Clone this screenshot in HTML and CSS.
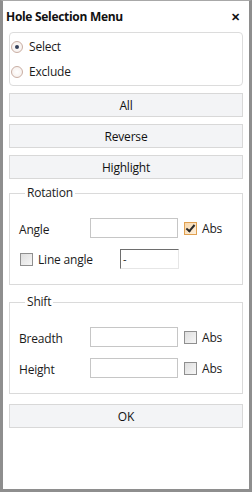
FILE: index.html
```html
<!DOCTYPE html>
<html>
<head>
<meta charset="utf-8">
<link rel="stylesheet" href="styles.css">
</head>
<body>
<div class="window">
  <div class="titlebar">
    <span class="title">Hole Selection Menu</span>
    <span class="close">✕</span>
  </div>
  <div class="content">
    <div class="radio-group">
      <div class="radio-row"><span class="radio checked"></span><span>Select</span></div>
      <div class="radio-row"><span class="radio"></span><span>Exclude</span></div>
    </div>
    <div class="btn">All</div>
    <div class="btn">Reverse</div>
    <div class="btn">Highlight</div>
    <fieldset class="group rotation">
      <legend>Rotation</legend>
      <div class="row">
        <span class="label">Angle</span>
        <span class="input"></span>
        <span class="check checked"></span>
        <span class="abs">Abs</span>
      </div>
      <div class="row line-row">
        <span class="check"></span>
        <span class="line-label">Line angle</span>
        <span class="input sunken">-</span>
      </div>
    </fieldset>
    <fieldset class="group shift">
      <legend>Shift</legend>
      <div class="row">
        <span class="label">Breadth</span>
        <span class="input"></span>
        <span class="check"></span>
        <span class="abs">Abs</span>
      </div>
      <div class="row">
        <span class="label">Height</span>
        <span class="input"></span>
        <span class="check"></span>
        <span class="abs">Abs</span>
      </div>
    </fieldset>
    <div class="btn ok">OK</div>
  </div>
</div>
</body>
</html>
```

FILE: styles.css
```css
html, body {
  margin: 0;
  padding: 0;
  background: #ffffff;
}
body {
  font-family: "Open Sans", "Noto Sans", sans-serif;
  font-size: 12px;
  letter-spacing: -0.2px;
  color: #1b1b1b;
}
.window {
  width: 252px;
  height: 492px;
  box-sizing: border-box;
  border-top: 1px solid #a8a8a8;
  border-left: 3px solid #8e8e8e;
  border-right: 3px solid #8e8e8e;
  border-bottom: 3px solid #8e8e8e;
  background: #ffffff;
}
.titlebar {
  height: 31px;
  display: flex;
  align-items: center;
  justify-content: space-between;
  padding: 0 9px 0 3px;
  box-sizing: border-box;
}
.title {
  font-weight: bold;
  font-size: 12px;
  letter-spacing: -0.3px;
  color: #111;
}
.close {
  font-size: 11px;
  font-weight: bold;
  color: #111;
}
.content {
  padding: 0 6px;
  display: flex;
  flex-direction: column;
}
.radio-group {
  height: 54px;
  box-sizing: border-box;
  border: 1px solid #dcdcdc;
  border-radius: 4px;
  padding: 3px 0 0 1px;
  display: flex;
  flex-direction: column;
  gap: 4px;
}
.radio-row {
  display: flex;
  align-items: center;
  gap: 6px;
  height: 21px;
}
.radio {
  width: 12px;
  height: 12px;
  box-sizing: border-box;
  border-radius: 50%;
  border: 1px solid #c9aea3;
  background: radial-gradient(circle, #ffffff 0%, #f4ece8 100%);
  position: relative;
}
.radio.checked::after {
  content: "";
  position: absolute;
  left: 3px;
  top: 3px;
  width: 4px;
  height: 4px;
  border-radius: 50%;
  background: #34405a;
}
.btn {
  height: 24px;
  box-sizing: border-box;
  margin-top: 7px;
  border: 1px solid #d8d8d8;
  background: #f3f4f6;
  display: flex;
  align-items: center;
  justify-content: center;
  color: #111;
}
.group {
  margin: 7px 0 0 0;
  border: 1px solid #dadada;
  padding: 0 0 0 9px;
  min-width: 0;
}
.group legend {
  margin-left: 6px;
  padding: 0 2px;
  line-height: 14px;
}
.rotation {
  height: 99px;
  box-sizing: border-box;
  padding-top: 18px;
}
.shift {
  margin-top: 10px;
  height: 99px;
  box-sizing: border-box;
  padding-top: 18px;
}
.row {
  display: flex;
  align-items: center;
  height: 20px;
  margin-bottom: 11px;
}
.label {
  width: 71px;
  padding-top: 2px;
}
.input {
  width: 88px;
  height: 20px;
  box-sizing: border-box;
  border: 1px solid #c6c6c6;
  background: #fff;
}
.input.sunken {
  width: 59px;
  border-top: 1px solid #6e6e6e;
  border-left: 1px solid #6e6e6e;
  border-right: 1px solid #e6e6e6;
  border-bottom: 1px solid #e6e6e6;
  line-height: 17px;
  padding-left: 2px;
  font-size: 11px;
}
.check {
  width: 13px;
  height: 13px;
  box-sizing: border-box;
  border: 1px solid #8f8f8f;
  background: linear-gradient(135deg, #dedede, #f6f6f6);
  margin-left: 6px;
  position: relative;
}
.check.checked {
  border-color: #e0a050;
  background: linear-gradient(135deg, #f8d6a8, #fdf0de);
}
.check.checked::after {
  content: "";
  position: absolute;
  left: 3px;
  top: 0px;
  width: 3px;
  height: 7px;
  border-right: 2px solid #2a2a2a;
  border-bottom: 2px solid #2a2a2a;
  transform: rotate(40deg);
}
.abs {
  margin-left: 5px;
}
.line-row .check {
  margin-left: 1px;
}
.line-label {
  margin-left: 5px;
  width: 82px;
}
.ok {
  margin-top: 10px;
}
```
